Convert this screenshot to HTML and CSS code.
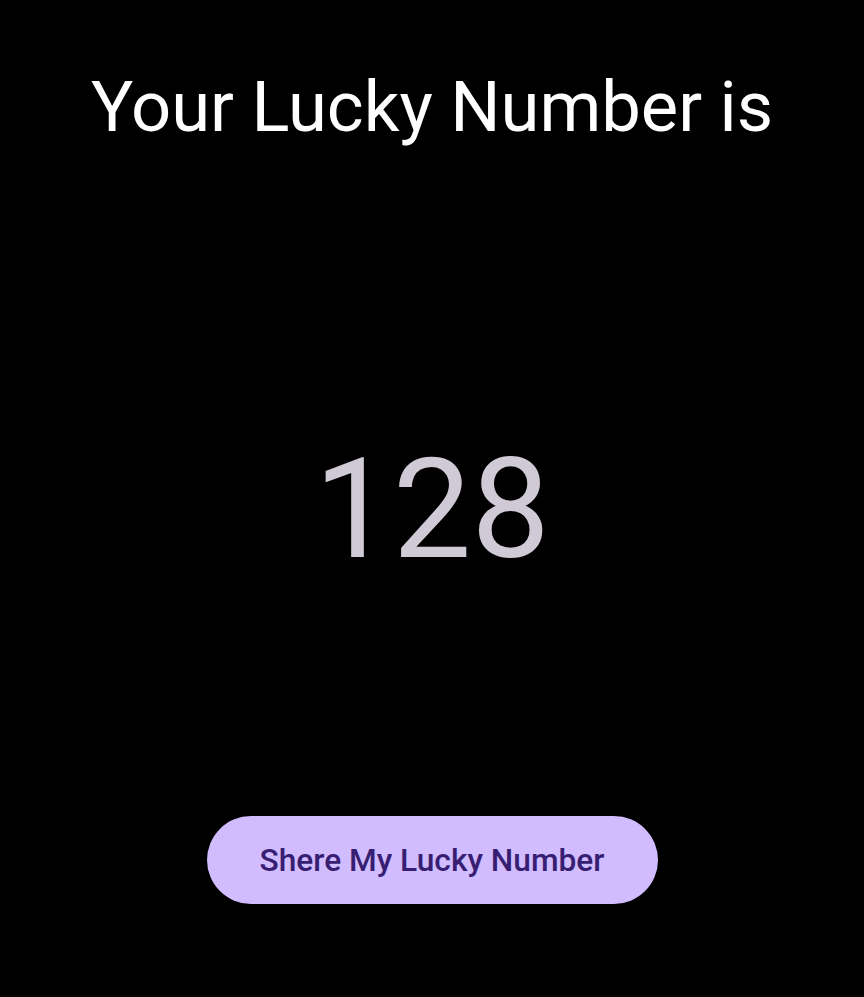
FILE: index.html
```html
<!DOCTYPE html>
<html>
<head>
<meta charset="utf-8">
<link rel="stylesheet" href="styles.css">
</head>
<body>
<main class="screen">
  <h1 class="title">Your Lucky Number is</h1>
  <div class="number">128</div>
  <button class="share">Shere My Lucky Number</button>
</main>
</body>
</html>
```
FILE: styles.css
```css
html, body {
  margin: 0;
  padding: 0;
  background: #000;
  height: 100%;
}
.screen {
  height: 997px;
  display: flex;
  flex-direction: column;
  align-items: center;
  font-family: Roboto, "Liberation Sans", sans-serif;
}
.title {
  margin: 66px 0 0;
  font-size: 70.5px;
  font-weight: 400;
  color: #fff;
  line-height: 82px;
}
.number {
  margin-top: 279px;
  font-size: 140px;
  font-weight: 400;
  color: #cfcad5;
  line-height: 164px;
}
.share {
  margin-top: 225px;
  width: 451px;
  height: 88px;
  border: none;
  border-radius: 44px;
  background: #d0bcff;
  color: #381e72;
  font-family: Roboto, "Liberation Sans", sans-serif;
  font-size: 31.7px;
  font-weight: 500;
  padding: 0;
}
```
